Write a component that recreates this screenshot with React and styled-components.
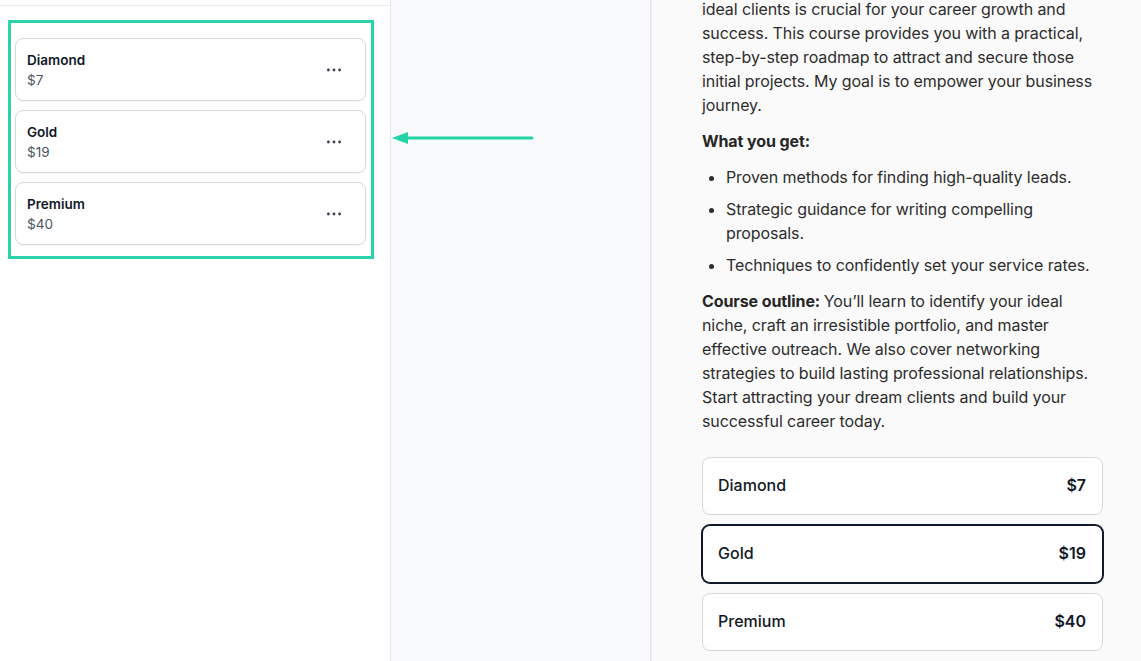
import React from 'react';
import styled, { createGlobalStyle } from 'styled-components';

const plans = [
  { name: 'Diamond', price: '$7' },
  { name: 'Gold', price: '$19' },
  { name: 'Premium', price: '$40' },
];

const GlobalStyle = createGlobalStyle`
  body {
    margin: 0;
    overflow: hidden;
    font-family: Inter, "Liberation Sans", sans-serif;
  }
`;

const Dots = () => (
  <svg width="14" height="4" viewBox="0 0 14 4">
    <circle cx="1.4" cy="2" r="1.4" fill="#374151" />
    <circle cx="7" cy="2" r="1.4" fill="#374151" />
    <circle cx="12.6" cy="2" r="1.4" fill="#374151" />
  </svg>
);

const Arrow = () => (
  <ArrowSvg width="145" height="16" viewBox="0 0 145 16">
    <line x1="14" y1="8" x2="141" y2="8" stroke="#22d3a5" strokeWidth="3" strokeLinecap="round" />
    <polygon points="1,8 17,2 17,14" fill="#22d3a5" />
  </ArrowSvg>
);

export default function App() {
  return (
    <Page>
      <GlobalStyle />
      <LeftPanel>
        <TopBar />
        <Highlight>
          {plans.map((p) => (
            <PlanRow key={p.name}>
              <div>
                <PlanName>{p.name}</PlanName>
                <PlanPrice>{p.price}</PlanPrice>
              </div>
              <MenuButton>
                <Dots />
              </MenuButton>
            </PlanRow>
          ))}
        </Highlight>
      </LeftPanel>

      <Middle>
        <Arrow />
      </Middle>

      <Preview>
        <Content>
          <Para>
            ideal clients is crucial for your career growth and success. This course provides you
            with a practical, step-by-step roadmap to attract and secure those initial projects. My
            goal is to empower your business journey.
          </Para>
          <Para>
            <strong>What you get:</strong>
          </Para>
          <List>
            <li>Proven methods for finding high-quality leads.</li>
            <li>Strategic guidance for writing compelling proposals.</li>
            <li>Techniques to confidently set your service rates.</li>
          </List>
          <Para>
            <strong>Course outline: </strong>You’ll learn to identify your ideal niche, craft an
            irresistible portfolio, and master effective outreach. We also cover networking
            strategies to build lasting professional relationships. Start attracting your dream
            clients and build your successful career today.
          </Para>
          <Options>
            {plans.map((p) => (
              <Option key={p.name} $selected={p.name === 'Gold'}>
                <span>{p.name}</span>
                <OptionPrice>{p.price}</OptionPrice>
              </Option>
            ))}
          </Options>
        </Content>
      </Preview>
    </Page>
  );
}

const Page = styled.div`
  display: flex;
  height: 100vh;
  overflow: hidden;
`;

const LeftPanel = styled.div`
  width: 390px;
  flex-shrink: 0;
  background: #fff;
  border-right: 1px solid #e5e7eb;
`;

const TopBar = styled.div`
  height: 5px;
  border-bottom: 1px solid #ebebeb;
`;

const Highlight = styled.div`
  margin: 14px 16px 0 8px;
  border: 3px solid #2ad4a8;
  padding: 15px 5px 11px 4px;
  display: flex;
  flex-direction: column;
  gap: 9px;
`;

const PlanRow = styled.div`
  height: 63px;
  box-sizing: border-box;
  border: 1px solid #d6d8e0;
  border-radius: 8px;
  box-shadow: 0 1px 2px rgba(16, 24, 40, 0.05);
  padding: 0 24px 0 11px;
  display: flex;
  align-items: center;
  justify-content: space-between;
`;

const PlanName = styled.div`
  font-size: 13.5px;
  font-weight: 600;
  line-height: 20px;
  color: #111827;
`;

const PlanPrice = styled.div`
  font-size: 13.5px;
  line-height: 20px;
  color: #4b5563;
`;

const MenuButton = styled.div`
  display: flex;
  align-items: center;
  padding: 4px 0;
`;

const Middle = styled.div`
  width: 259px;
  flex-shrink: 0;
  background: #f8f9fb;
  border-right: 1px solid #e6e7ea;
  position: relative;
`;

const ArrowSvg = styled.svg`
  position: absolute;
  left: 0;
  top: 130px;
`;

const Preview = styled.div`
  flex: 1;
  background: #fafafa;
  box-shadow: inset 1px 0 0 #f0f0f0;
  padding: 0 38px 0 51px;
`;

const Content = styled.div`
  margin-top: -3px;
  font-size: 16px;
  letter-spacing: -0.1px;
  line-height: 24px;
  color: #2d2d2d;
  strong {
    font-weight: 700;
    color: #262626;
  }
`;

const Para = styled.p`
  margin: 0 0 12px;
`;

const List = styled.ul`
  margin: 0 0 12px;
  padding-left: 24px;
  li + li {
    margin-top: 8px;
  }
`;

const Options = styled.div`
  margin-top: 24px;
  display: flex;
  flex-direction: column;
  gap: 10px;
`;

const Option = styled.div`
  height: 58px;
  box-sizing: border-box;
  border: 1px solid ${(p) => (p.$selected ? '#111827' : '#d6d8e1')};
  box-shadow: ${(p) => (p.$selected ? '0 0 0 1px #111827' : 'none')};
  border-radius: 8px;
  background: #fff;
  padding: 0 16px 2px 15px;
  display: flex;
  align-items: center;
  justify-content: space-between;
  font-size: 16px;
  letter-spacing: 0;
  font-weight: 500;
  color: #111827;
`;

const OptionPrice = styled.span`
  font-weight: 600;
`;
